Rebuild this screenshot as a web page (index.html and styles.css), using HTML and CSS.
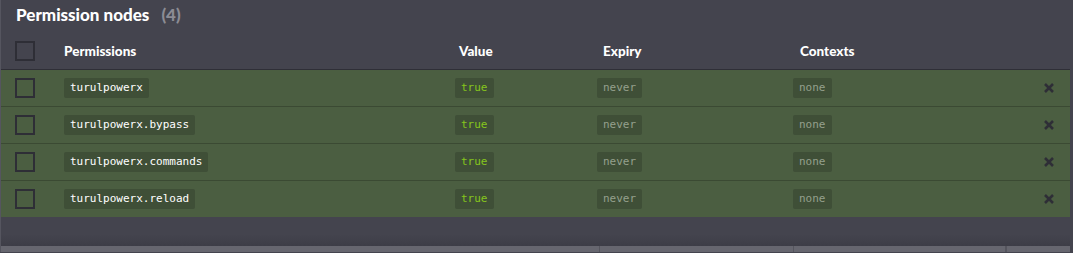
FILE: index.html
```html
<html lang="en">
<head>
<title>Permission nodes</title>
<link rel="stylesheet" href="styles.css">
</head>
<body>
  <div class="panel">
    <h2 class="title">Permission nodes <span class="count">(4)</span></h2>
    <div class="table">
      <div class="row head">
        <div class="cell"><span class="check"></span></div>
        <div class="cell">Permissions</div>
        <div class="cell h-value">Value</div>
        <div class="cell h-expiry">Expiry</div>
        <div class="cell h-contexts">Contexts</div>
        <div class="cell"></div>
      </div>
      <div class="row node">
        <div class="cell"><span class="check"></span></div>
        <div class="cell"><code class="pill perm">turulpowerx</code></div>
        <div class="cell"><code class="pill val">true</code></div>
        <div class="cell"><code class="pill dim">never</code></div>
        <div class="cell"><code class="pill dim">none</code></div>
        <div class="cell del"><svg width="10" height="10" viewBox="0 0 10 10"><path d="M1 1L9 9M9 1L1 9"/></svg></div>
      </div>
      <div class="row node">
        <div class="cell"><span class="check"></span></div>
        <div class="cell"><code class="pill perm">turulpowerx.bypass</code></div>
        <div class="cell"><code class="pill val">true</code></div>
        <div class="cell"><code class="pill dim">never</code></div>
        <div class="cell"><code class="pill dim">none</code></div>
        <div class="cell del"><svg width="10" height="10" viewBox="0 0 10 10"><path d="M1 1L9 9M9 1L1 9"/></svg></div>
      </div>
      <div class="row node">
        <div class="cell"><span class="check"></span></div>
        <div class="cell"><code class="pill perm">turulpowerx.commands</code></div>
        <div class="cell"><code class="pill val">true</code></div>
        <div class="cell"><code class="pill dim">never</code></div>
        <div class="cell"><code class="pill dim">none</code></div>
        <div class="cell del"><svg width="10" height="10" viewBox="0 0 10 10"><path d="M1 1L9 9M9 1L1 9"/></svg></div>
      </div>
      <div class="row node">
        <div class="cell"><span class="check"></span></div>
        <div class="cell"><code class="pill perm">turulpowerx.reload</code></div>
        <div class="cell"><code class="pill val">true</code></div>
        <div class="cell"><code class="pill dim">never</code></div>
        <div class="cell"><code class="pill dim">none</code></div>
        <div class="cell del"><svg width="10" height="10" viewBox="0 0 10 10"><path d="M1 1L9 9M9 1L1 9"/></svg></div>
      </div>
    </div>
    <div class="spacer"></div>
    <div class="bar">
      <div class="bar-cell first"></div>
      <div class="bar-cell second"></div>
      <div class="bar-cell third"></div>
      <div class="bar-cell"></div>
    </div>
  </div>
</body>
</html>
```

FILE: styles.css
```css
body {
  margin: 0;
  background: #44444e;
  font-family: "Lato", "Open Sans", sans-serif;
  color: #ffffff;
  overflow: hidden;
}

.panel {
  border-left: 1px solid #55555f;
  padding-right: 3px;
}

.title {
  margin: 0;
  height: 33px;
  padding-left: 15px;
  font-size: 17px;
  font-weight: 900;
  line-height: 30px;
}

.count {
  color: #8c8c94;
  margin-left: 8px;
}

.row {
  display: grid;
  grid-template-columns: 63px 391px 142px 196px 1fr 42px;
  align-items: center;
}

.head {
  height: 36px;
  border-bottom: 1px solid #2f2f37;
  font-size: 13.5px;
  font-weight: 900;
}

.h-value { padding-left: 4px; }
.h-expiry { padding-left: 6px; }
.h-contexts { padding-left: 7px; }

.node {
  height: 36px;
  background: #4b5e41;
  border-bottom: 1px solid #3b4a33;
}

.node:last-child {
  border-bottom: none;
}

.check {
  display: block;
  width: 16px;
  height: 16px;
  margin-left: 14px;
  border: 2px solid #2e2e36;
}

.pill {
  display: inline-block;
  font-family: "DejaVu Sans Mono", monospace;
  font-size: 11px;
  line-height: 20px;
  padding: 0 6px;
  background: #3f4f37;
  border-radius: 2px;
}

.perm { color: #ffffff; }
.val { color: #86c61c; }
.dim { color: #95a08d; }

.del {
  display: flex;
  justify-content: center;
}

.del path {
  stroke: #2e2e36;
  stroke-width: 2.6;
  fill: none;
}

.spacer {
  height: 29px;
  background: linear-gradient(#44444e 60%, #3d3d47);
}

.bar {
  display: flex;
  height: 6px;
  background: #66666f;
}

.bar-cell {
  border-right: 1px solid #55555e;
}

.first { width: 598px; }
.second { width: 193px; }
.third { width: 211px; }
```
